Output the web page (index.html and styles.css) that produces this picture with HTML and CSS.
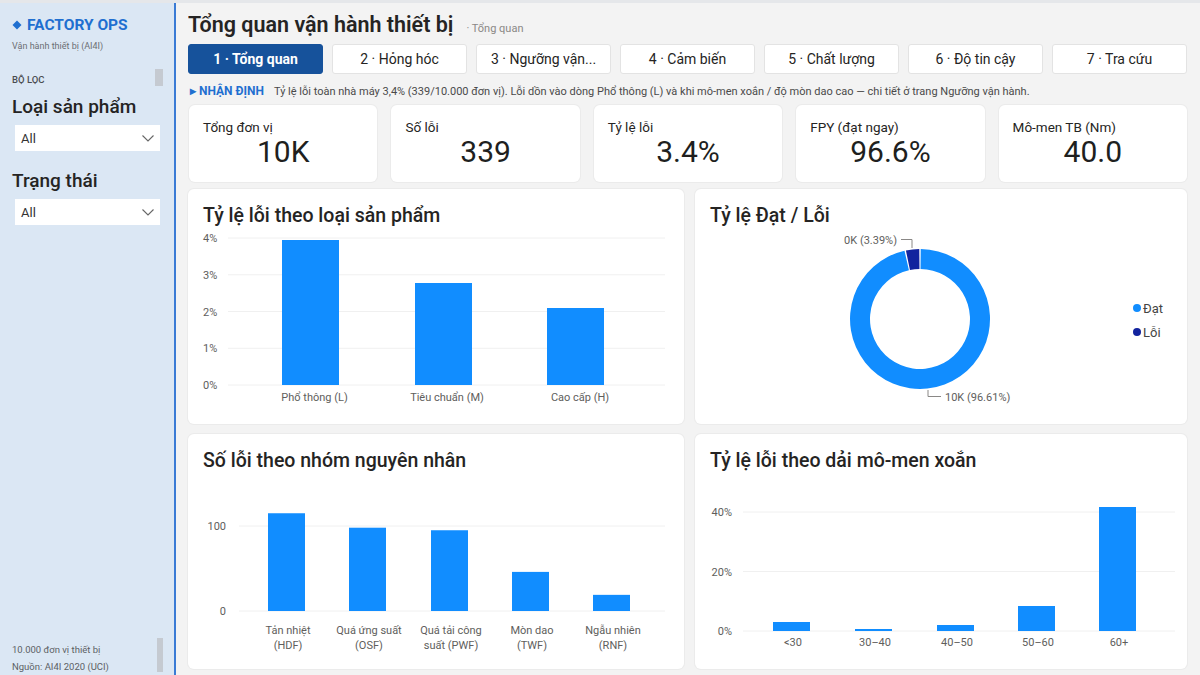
FILE: index.html
```html
<!DOCTYPE html>
<html lang="vi">
<head>
  <meta charset="UTF-8">
  <meta name="viewport" content="width=device-width, initial-scale=1.0">
  <title>Factory Ops – Tổng quan</title>
  <link rel="stylesheet" href="styles.css">
</head>
<body>
  <aside class="sidebar">
    <div class="brand">
      <svg class="brand-mark" width="10" height="10" viewBox="0 0 10 10"><rect x="1.8" y="1.8" width="6.4" height="6.4" transform="rotate(45 5 5)"/></svg>
      FACTORY OPS
    </div>
    <p class="brand-sub">Vận hành thiết bị (AI4I)</p>
    <p class="filter-heading">BỘ LỌC</p>

    <label class="filter-label">Loại sản phẩm</label>
    <div class="dropdown">
      <span>All</span>
      <svg width="12" height="7" viewBox="0 0 12 7"><polyline points="0.5,0.5 6,6 11.5,0.5"/></svg>
    </div>

    <label class="filter-label">Trạng thái</label>
    <div class="dropdown">
      <span>All</span>
      <svg width="12" height="7" viewBox="0 0 12 7"><polyline points="0.5,0.5 6,6 11.5,0.5"/></svg>
    </div>

    <div class="sidebar-foot">
      <p>10.000 đơn vị thiết bị</p>
      <p>Nguồn: AI4I 2020 (UCI)</p>
    </div>

    <span class="thumb thumb-top"></span>
    <span class="thumb thumb-bottom"></span>
  </aside>

  <main class="main">
    <header class="page-head">
      <h1>Tổng quan vận hành thiết bị</h1>
      <span class="crumb">· Tổng quan</span>
    </header>

    <nav class="tabs">
      <a class="tab active">1 · Tổng quan</a>
      <a class="tab">2 · Hỏng hóc</a>
      <a class="tab">3 · Ngưỡng vận...</a>
      <a class="tab">4 · Cảm biến</a>
      <a class="tab">5 · Chất lượng</a>
      <a class="tab">6 · Độ tin cậy</a>
      <a class="tab">7 · Tra cứu</a>
    </nav>

    <p class="insight"><b>▸ NHẬN ĐỊNH</b>Tỷ lệ lỗi toàn nhà máy 3,4% (339/10.000 đơn vị). Lỗi dồn vào dòng Phổ thông (L) và khi mô-men xoắn / độ mòn dao cao — chi tiết ở trang Ngưỡng vận hành.</p>

    <section class="kpis">
      <div class="kpi"><span class="kpi-label">Tổng đơn vị</span><span class="kpi-value">10K</span></div>
      <div class="kpi"><span class="kpi-label">Số lỗi</span><span class="kpi-value">339</span></div>
      <div class="kpi"><span class="kpi-label">Tỷ lệ lỗi</span><span class="kpi-value">3.4%</span></div>
      <div class="kpi"><span class="kpi-label">FPY (đạt ngay)</span><span class="kpi-value">96.6%</span></div>
      <div class="kpi"><span class="kpi-label">Mô-men TB (Nm)</span><span class="kpi-value">40.0</span></div>
    </section>

    <section class="charts">
      <!-- defect rate by product type, 0–4% -->
      <div class="card">
        <h2>Tỷ lệ lỗi theo loại sản phẩm</h2>
        <svg class="plot">
          <g class="grid">
            <line x1="40" y1="9" x2="477" y2="9"/>
            <line x1="40" y1="45.75" x2="477" y2="45.75"/>
            <line x1="40" y1="82.5" x2="477" y2="82.5"/>
            <line x1="40" y1="119.25" x2="477" y2="119.25"/>
            <line x1="40" y1="156" x2="477" y2="156"/>
          </g>
          <g class="axis">
            <text x="15" y="13">4%</text>
            <text x="15" y="49.75">3%</text>
            <text x="15" y="86.5">2%</text>
            <text x="15" y="123.25">1%</text>
            <text x="15" y="160">0%</text>
          </g>
          <g class="bars">
            <rect x="94" y="11" width="57" height="145"/>
            <rect x="227" y="54" width="57" height="102"/>
            <rect x="359" y="79" width="57" height="77"/>
          </g>
          <g class="axis cats">
            <text x="126.5" y="172">Phổ thông (L)</text>
            <text x="259" y="172">Tiêu chuẩn (M)</text>
            <text x="392" y="172">Cao cấp (H)</text>
          </g>
        </svg>
      </div>

      <!-- pass / fail donut -->
      <div class="card">
        <h2>Tỷ lệ Đạt / Lỗi</h2>
        <svg class="plot">
          <path class="slice-pass" d="M 225.73 20 A 70 70 0 1 1 209.49 21.74 L 213.92 41.24 A 50 50 0 1 0 225.52 40 Z"/>
          <path class="slice-fail" d="M 210.92 21.43 A 70 70 0 0 1 224.27 20 L 224.48 40 A 50 50 0 0 0 214.95 41.02 Z"/>
          <polyline class="leader" points="206,10.5 217,10.5 217,19"/>
          <polyline class="leader" points="233,161 233,167.5 246,167.5"/>
          <g class="axis">
            <text x="202" y="14.5" text-anchor="end">0K (3.39%)</text>
            <text x="250" y="171.5">10K (96.61%)</text>
          </g>
          <g class="legend">
            <circle class="slice-pass" cx="442" cy="79" r="4"/>
            <text x="448" y="83.5">Đạt</text>
            <circle class="slice-fail" cx="442" cy="103" r="4"/>
            <text x="448" y="107.5">Lỗi</text>
          </g>
        </svg>
      </div>

      <!-- failures by cause -->
      <div class="card">
        <h2>Số lỗi theo nhóm nguyên nhân</h2>
        <svg class="plot">
          <g class="grid">
            <line x1="51" y1="52" x2="477" y2="52"/>
            <line x1="51" y1="137" x2="477" y2="137"/>
          </g>
          <g class="axis" text-anchor="end">
            <text x="38" y="56">100</text>
            <text x="38" y="141">0</text>
          </g>
          <g class="bars">
            <rect x="80" y="39.25" width="37" height="97.75"/>
            <rect x="161" y="53.7" width="37" height="83.3"/>
            <rect x="243" y="56.25" width="37" height="80.75"/>
            <rect x="324" y="97.9" width="37" height="39.1"/>
            <rect x="405" y="120.85" width="37" height="16.15"/>
          </g>
          <g class="axis cats">
            <text x="100" y="160">Tản nhiệt</text>
            <text x="100" y="175">(HDF)</text>
            <text x="181" y="160">Quá ứng suất</text>
            <text x="181" y="175">(OSF)</text>
            <text x="263" y="160">Quá tải công</text>
            <text x="263" y="175">suất (PWF)</text>
            <text x="344" y="160">Mòn dao</text>
            <text x="344" y="175">(TWF)</text>
            <text x="425" y="160">Ngẫu nhiên</text>
            <text x="425" y="175">(RNF)</text>
          </g>
        </svg>
      </div>

      <!-- defect rate by torque band, 0–40% -->
      <div class="card">
        <h2>Tỷ lệ lỗi theo dải mô-men xoắn</h2>
        <svg class="plot">
          <g class="grid">
            <line x1="48" y1="38" x2="480" y2="38"/>
            <line x1="48" y1="97.5" x2="480" y2="97.5"/>
            <line x1="48" y1="157" x2="480" y2="157"/>
          </g>
          <g class="axis" text-anchor="end">
            <text x="37" y="42">40%</text>
            <text x="37" y="101.5">20%</text>
            <text x="37" y="161">0%</text>
          </g>
          <g class="bars">
            <rect x="78" y="148" width="37" height="9"/>
            <rect x="160" y="155" width="37" height="2"/>
            <rect x="242" y="151" width="37" height="6"/>
            <rect x="323" y="132" width="37" height="25"/>
            <rect x="404" y="33" width="37" height="124"/>
          </g>
          <g class="axis cats">
            <text x="98" y="172">&lt;30</text>
            <text x="180" y="172">30–40</text>
            <text x="262" y="172">40–50</text>
            <text x="343" y="172">50–60</text>
            <text x="424" y="172">60+</text>
          </g>
        </svg>
      </div>
    </section>
  </main>
</body>
</html>
```

FILE: styles.css
```css
* {
  margin: 0;
  padding: 0;
  box-sizing: border-box;
}

html,
body {
  height: 100%;
}

body {
  display: flex;
  overflow: hidden;
  border-top: 3px solid #e5e7ea;
  background: #f3f3f3;
  color: #252423;
  font-family: Roboto, "Noto Sans", sans-serif;
}

/* ---------- sidebar ---------- */

.sidebar {
  position: relative;
  width: 176px;
  flex-shrink: 0;
  display: flex;
  flex-direction: column;
  padding: 12px 12px 0;
  background: #dbe7f4;
  border-right: 2px solid #3a7bd5;
}

.brand {
  display: flex;
  align-items: center;
  gap: 5px;
  font-size: 15.5px;
  line-height: 20px;
  font-weight: 700;
  color: #1f6fd0;
}

.brand-mark {
  fill: #1f6fd0;
}

.brand-sub {
  margin-top: 5px;
  font-size: 9px;
  line-height: 12px;
  color: #6b6e73;
}

.filter-heading {
  margin-top: 22px;
  font-size: 9.5px;
  line-height: 12px;
  font-weight: 500;
  color: #4a4c50;
}

.filter-label {
  display: block;
  margin-top: 8px;
  font-size: 19px;
  line-height: 26px;
  font-weight: 500;
  color: #252423;
}

.dropdown {
  display: flex;
  align-items: center;
  justify-content: space-between;
  width: 145px;
  height: 26px;
  margin: 5px 0 0 3px;
  padding: 0 6px;
  background: #fff;
  font-size: 13px;
  color: #333;
}

.dropdown svg {
  fill: none;
  stroke: #666;
  stroke-width: 1.1;
}

.dropdown + .filter-label {
  margin-top: 17px;
}

.sidebar-foot {
  margin-top: auto;
  font-size: 9.5px;
  line-height: 17px;
  color: #5c5f64;
}

.thumb {
  position: absolute;
  background: #c5cad1;
}

.thumb-top {
  left: 155px;
  top: 66px;
  width: 8px;
  height: 17px;
}

.thumb-bottom {
  left: 157px;
  top: 635px;
  width: 6px;
  height: 34px;
}

/* ---------- main area ---------- */

.main {
  flex: 1;
  display: flex;
  flex-direction: column;
  padding: 8px 13px 0 12px;
}

.page-head {
  display: flex;
  align-items: baseline;
  gap: 13px;
  height: 28px;
  overflow: hidden;
}

.page-head h1 {
  font-size: 21.5px;
  line-height: 28px;
  font-weight: 600;
  color: #252423;
}

.crumb {
  font-size: 11px;
  color: #8a8886;
}

.tabs {
  display: grid;
  grid-template-columns: repeat(7, 1fr);
  gap: 9px;
  margin-top: 5px;
}

.tab {
  height: 30px;
  display: flex;
  align-items: center;
  justify-content: center;
  background: #fff;
  border: 1px solid #e3e3e3;
  border-radius: 3px;
  font-size: 14px;
  color: #252423;
}

.tab.active {
  background: #16529b;
  border-color: #16529b;
  color: #fff;
  font-weight: 700;
}

.insight {
  margin-top: 9px;
  padding-left: 2px;
  font-size: 11px;
  line-height: 16px;
  color: #4a4a4a;
  white-space: nowrap;
}

.insight b {
  margin-right: 10px;
  font-size: 12px;
  color: #1f6fd0;
}

.kpis {
  display: grid;
  grid-template-columns: repeat(5, 1fr);
  gap: 14px;
  margin: 5px 0 0 1px;
}

.kpi {
  height: 77px;
  display: flex;
  flex-direction: column;
  padding: 14px 14px 0;
  background: #fff;
  border-radius: 6px;
  box-shadow: 0 0 0 1px #ebebeb;
}

.kpi-label {
  font-size: 13.5px;
  line-height: 16px;
}

.kpi-value {
  text-align: center;
  font-size: 30px;
  line-height: 34px;
  color: #201f1e;
}

/* ---------- chart cards ---------- */

.charts {
  display: grid;
  grid-template-columns: 496px 1fr;
  grid-template-rows: 235px 235px;
  gap: 10px 11px;
  margin-top: 7px;
}

.card {
  padding-top: 14px;
  background: #fff;
  border-radius: 6px;
  box-shadow: 0 0 0 1px #ebebeb;
  overflow: hidden;
}

.card h2 {
  padding-left: 15px;
  font-size: 19.5px;
  line-height: 26px;
  font-weight: 500;
  color: #252423;
}

.plot {
  display: block;
  width: 100%;
  height: 195px;
}

.grid line {
  stroke: #f0f0f0;
  stroke-width: 1;
}

.axis text {
  font-size: 11px;
  fill: #605e5c;
}

.cats text {
  text-anchor: middle;
}

.bars rect {
  fill: #118dff;
}

.slice-pass {
  fill: #118dff;
}

.slice-fail {
  fill: #12239e;
}

.leader {
  fill: none;
  stroke: #8a8886;
  stroke-width: 1;
}

.legend text {
  font-size: 13px;
  fill: #444;
}
```
